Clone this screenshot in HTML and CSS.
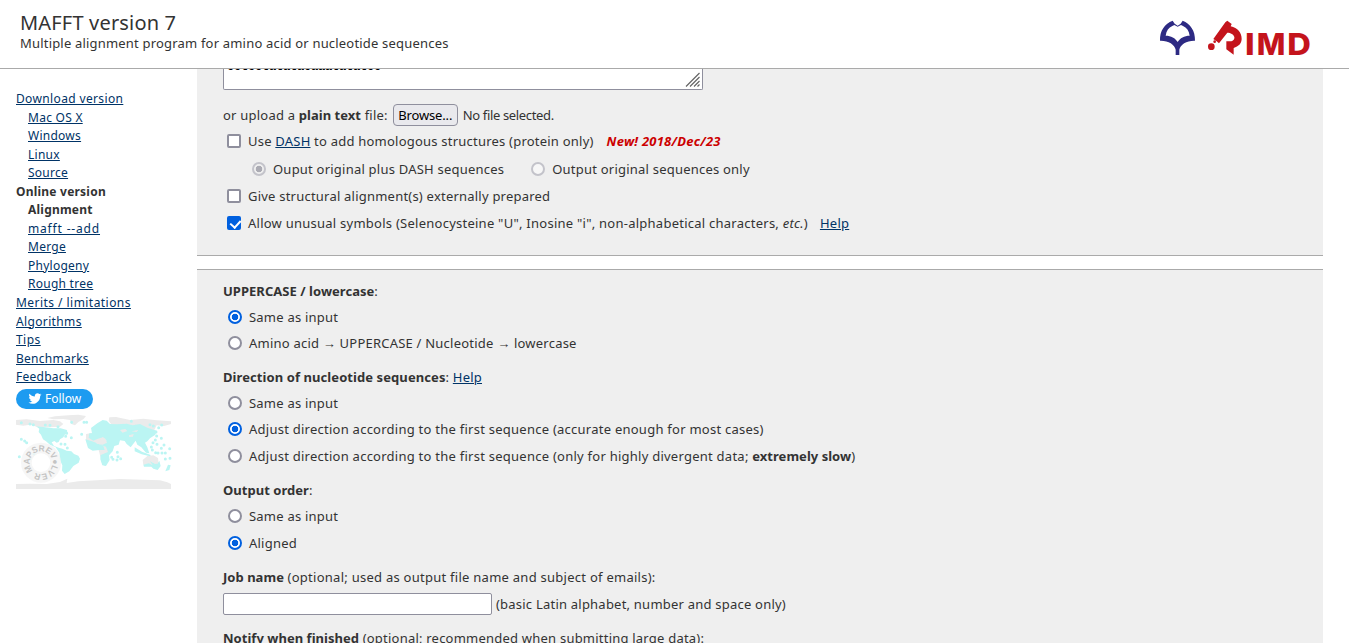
FILE: index.html
```
<!DOCTYPE html>
<html lang="en">
<head>
<meta charset="utf-8">
<title>MAFFT alignment and NJ / UPGMA phylogeny</title>
<link rel="stylesheet" href="styles.css">
</head>
<body>
<header class="top">
  <div class="brand">
    <h1>MAFFT version 7</h1>
    <p>Multiple alignment program for amino acid or nucleotide sequences</p>
  </div>
  <svg class="logos" viewBox="57 54 456 117" aria-label="Osaka University RIMD">
    <path fill="#2d2a83" d="M60 122C59 92 74 71 98 62L104 71L113 77L122 71L128 62C151 71 166 92 165 122C141 121 121 133 118 149V165H107V149C104 133 84 121 60 122Z"/>
    <path fill="#fff" d="M77 107C79 92 86 83 97 78L103 75L113 80L123 75L129 78C140 83 147 92 149 107C133 107 120 114 113 126C106 114 93 107 77 107Z"/>
    <g fill="#c4141c">
      <circle cx="214" cy="140" r="10"/>
      <circle cx="224" cy="125" r="4"/>
      <path d="M220 117L256 67L262 62L275 72L272 79C293 84 305 98 305 117C304 132 296 138 281 144V164L259 148V124H271C279 124 284 118 283 111C281 103 272 98 262 98L237 130L229 123Z"/>
      <g class="imd">
        <text x="315" y="165" textLength="29" lengthAdjust="spacingAndGlyphs">I</text>
        <text x="350" y="165" textLength="86" lengthAdjust="spacingAndGlyphs">M</text>
        <text x="442" y="165" textLength="71" lengthAdjust="spacingAndGlyphs">D</text>
      </g>
    </g>
  </svg>
</header>
<div class="page">
  <nav class="side">
    <ul>
      <li><a href="#" class="dl">Download version</a></li>
      <li class="sub"><a href="#">Mac OS X</a></li>
      <li class="sub"><a href="#">Windows</a></li>
      <li class="sub"><a href="#">Linux</a></li>
      <li class="sub"><a href="#">Source</a></li>
      <li><b>Online version</b></li>
      <li class="sub"><b>Alignment</b></li>
      <li class="sub"><a href="#" class="wide">mafft --add</a></li>
      <li class="sub"><a href="#">Merge</a></li>
      <li class="sub"><a href="#">Phylogeny</a></li>
      <li class="sub"><a href="#">Rough tree</a></li>
      <li><a href="#" class="merits">Merits / limitations</a></li>
      <li><a href="#" class="dl">Algorithms</a></li>
      <li><a href="#" class="merits">Tips</a></li>
      <li><a href="#">Benchmarks</a></li>
      <li><a href="#">Feedback</a></li>
    </ul>
    <a class="follow" href="#">
      <svg viewBox="0 0 24 24"><path fill="#fff" d="M23.954 4.569c-.885.389-1.83.654-2.825.775 1.014-.611 1.794-1.574 2.163-2.723-.951.555-2.005.959-3.127 1.184-.896-.959-2.173-1.559-3.591-1.559-2.717 0-4.92 2.203-4.92 4.917 0 .39.045.765.127 1.124C7.691 8.094 4.066 6.13 1.64 3.161c-.427.722-.666 1.561-.666 2.475 0 1.71.87 3.213 2.188 4.096-.807-.026-1.566-.248-2.228-.616v.061c0 2.385 1.693 4.374 3.946 4.827-.413.111-.849.171-1.296.171-.314 0-.615-.03-.916-.086.631 1.953 2.445 3.377 4.604 3.417-1.68 1.319-3.809 2.105-6.102 2.105-.39 0-.779-.023-1.17-.067 2.189 1.394 4.768 2.209 7.557 2.209 9.054 0 13.999-7.496 13.999-13.986 0-.209 0-.42-.015-.63.961-.689 1.8-1.56 2.46-2.548z"/></svg>Follow</a>
    <svg class="map" viewBox="18 15 465 222">
      <g fill="#ebebeb">
        <path d="M18 30L50 28L90 33L130 30L150 34L160 42L150 50L120 52L80 50L60 44L40 47L18 44Z"/>
        <path d="M112 24L135 19L175 16L205 14L228 18L220 28L205 36L195 46L184 42L180 30L160 27L130 28Z"/>
        <path d="M298 22L318 21L360 30L400 26L440 31L483 34V42L462 48L440 46L430 66L400 60L310 52L296 32Z"/>
        <path d="M228 72L262 66L284 80L292 96L300 110L294 150L285 168L276 160L266 120L240 108L228 92Z"/>
        <path d="M398 150L412 138L430 136L444 144L446 164L430 168L400 164Z"/>
        <path d="M18 222L60 221L110 222L150 216L172 206L170 219L205 214L260 211L330 207L400 209L450 211L472 217L483 222V237H18Z"/>
      </g>
      <g fill="#bbf5f3">
        <path d="M78 49L100 51L130 55L152 55L171 60L172 68L164 74L160 82L150 88L146 96L140 98L133 93L125 97L132 108L146 113L157 116L170 122L184 124L192 132L205 137L210 146L206 158L190 168L178 184L164 192L156 182L157 166L149 148L148 128L137 112L120 104L108 94L99 88L93 74L86 66L88 56Z"/>
        <path d="M243 54L262 40L278 30L290 32L300 42L320 43L350 41L368 46L390 42L412 53L440 62L436 74L420 85L412 94L405 98L412 112L418 130L408 128L399 118L394 112L382 104L377 92L362 112L350 102L344 93L330 91L326 104L313 108L308 124L297 136L299 150L288 168L277 166L271 148L272 135L294 126L288 110L272 105L268 96L290 92L278 82L260 88L250 92L236 83L238 70L246 70Z"/>
        <path d="M226 88L244 93L262 100L280 108L284 120L268 120L248 122L234 114Z"/>
        <path d="M374 112L396 125L422 135L420 139L395 133L374 124ZM400 164L416 160L428 166L420 154L432 160L442 162L448 152L452 168L443 180L430 176L424 170L402 170ZM474 164L482 166L478 180L466 184L470 174Z"/>
      </g>
      <path fill="#ebebeb" d="M258 92L276 88L278 81L286 86L291 98L278 104L260 101ZM357 76L371 72L369 80L358 81ZM330 60L346 57L352 63L338 68ZM365 64L385 60L380 66ZM425 156L435 150L442 155L436 162Z"/>
      <path class="spots" d="M34 38h0M60 42h0M70 44h0M106 45h0M120 46h0M144 50h0M170 70h0M167 79h0M184 83h0M185 37h0M215 73h0M222 37h0M230 37h0M34 88h0M44 93h0M50 98h0M28 140h0M60 146h0M72 132h0M364 34h0M376 49h0M420 44h0M430 48h0M446 53h0M455 45h0M438 66h0M440 78h0M436 90h0M429 98h0M424 111h0M427 120h0M441 103h0M454 85h0M462 105h0M444 129h0M437 128h0M456 129h0M454 115h0M479 116h0M466 129h0M480 145h0M466 147h0M322 127h0M324 140h0M321 150h0M332 146h0M309 148h0M153 102h0M165 103h0M172 114h0M305 142h0"/>
      <circle cx="93" cy="158" r="60" fill="#f4f4f4" fill-opacity=".8"/>
      <circle cx="93" cy="158" r="28" fill="#fff"/>
      <path id="arc" fill="none" d="M68.960 182.040A34 34 0 1 1 117.040 182.040A34 34 0 0 1 68.960 182.040"/>
      <text class="rev"><textPath href="#arc" textLength="204" lengthAdjust="spacingAndGlyphs">MAPSREV●LVER</textPath></text>
    </svg>
  </nav>
  <main>
    <section class="panel first">
      <div class="seq"><span>cctcctatatacaaatatatcc</span>
        <svg class="grip" viewBox="0 0 16 16"><path d="M1 14.500L14.500 1M5 14.500L14.500 5M9 14.500L14.500 9M12.500 14.500L14.500 12.500"/></svg>
      </div>
      <div class="row file"><span>or upload a <b>plain text</b> file:</span><button>Browse...</button><span class="none">No file selected.</span></div>
      <label class="row chk"><input type="checkbox"><span>Use <a href="#">DASH</a> to add homologous structures (protein only)</span><em class="new">New! 2018/Dec/23</em></label>
      <div class="row dash"><label><input type="radio" name="d" checked disabled>Ouput original plus DASH sequences</label><label><input type="radio" name="d" disabled>Output original sequences only</label></div>
      <label class="row chk ext"><input type="checkbox">Give structural alignment(s) externally prepared</label>
      <label class="row chk sym"><input type="checkbox" checked><span>Allow unusual symbols (Selenocysteine "U", Inosine "i", non-alphabetical characters, <i>etc.</i>)</span><a class="help" href="#">Help</a></label>
    </section>
    <section class="panel second">
      <div class="row"><span><b>UPPERCASE / lowercase</b>:</span></div>
      <label class="row rad"><input type="radio" name="c" checked>Same as input</label>
      <label class="row rad"><input type="radio" name="c">Amino acid → UPPERCASE / Nucleotide → lowercase</label>
      <div class="row head"><span><b class="dir">Direction of nucleotide sequences</b>: <a href="#">Help</a></span></div>
      <label class="row rad"><input type="radio" name="n">Same as input</label>
      <label class="row rad adj"><input type="radio" name="n" checked>Adjust direction according to the first sequence (accurate enough for most cases)</label>
      <label class="row rad adj low"><input type="radio" name="n"><span>Adjust direction according to the first sequence (only for highly divergent data; <b>extremely slow</b>)</span></label>
      <div class="row head"><span><b>Output order</b>:</span></div>
      <label class="row rad"><input type="radio" name="o">Same as input</label>
      <label class="row rad low"><input type="radio" name="o" checked>Aligned</label>
      <div class="row head job"><span><b>Job name</b> (optional; used as output file name and subject of emails):</span></div>
      <div class="row low"><input class="name" type="text"><span>(basic Latin alphabet, number and space only)</span></div>
      <div class="row head"><span><b>Notify when finished</b> (optional; recommended when submitting large data):</span></div>
    </section>
  </main>
</div>
</body>
</html>
```
FILE: styles.css
```
* { box-sizing: border-box; }
body {
  margin: 0;
  height: 643px;
  overflow: hidden;
  background: #fff;
  color: #333;
  font: 13px/18px "Noto Sans", sans-serif;
  letter-spacing: .22px;
}
a { color: #036; text-underline-offset: 1px; }
b { letter-spacing: .03px; }
.top {
  height: 69px;
  border-bottom: 1px solid #aaa;
  display: flex;
  justify-content: space-between;
  padding: 11px 38px 0 20px;
}
.top h1 { margin: 0; font-size: 20px; line-height: 24px; font-weight: 400; letter-spacing: .18px; }
.top p { margin: -1px 0 0; line-height: 18px; letter-spacing: .19px; }
.logos { width: 152px; height: 39px; margin-top: 7px; overflow: visible; }
.imd { font: 800 89px Inter, sans-serif; letter-spacing: 0; }
.page { display: flex; height: 574px; }
.side { width: 197px; flex: none; padding: 21px 0 0 16px; font-size: 12px; letter-spacing: .26px; }
.side ul { list-style: none; margin: 0; padding: 0; }
.side li { height: 18.55px; line-height: 18px; white-space: nowrap; }
.side .sub { padding-left: 12px; }
.side b { letter-spacing: .22px; }
.side .wide { letter-spacing: .83px; }
.side .dl { letter-spacing: .36px; }
.side .merits { letter-spacing: .45px; }
.follow {
  display: flex;
  align-items: center;
  width: 77px;
  height: 20px;
  margin-top: 2px;
  padding-left: 12px;
  gap: 3px;
  border-radius: 10px;
  background: #1d9bf0;
  color: #fff;
  font-size: 12px;
  letter-spacing: 0;
  text-decoration: none;
}
.follow svg { width: 14px; height: 13px; }
.map { display: block; width: 155px; height: 74px; margin-top: 6px; overflow: visible; }
.spots { stroke: #bbf5f3; stroke-width: 9; stroke-linecap: round; }
.rev { font: 700 26px "Liberation Sans", sans-serif; letter-spacing: 0; fill: #c4c4c4; }
main { width: 1126px; }
.panel { background: #efefef; padding: 0 26px; }
.first { height: 187px; border-bottom: 1px solid #aaa; }
.second { height: 400px; margin-top: 13px; padding-top: 8px; border-top: 1px solid #aaa; }
.seq {
  display: flex;
  justify-content: space-between;
  width: 480px;
  height: 21px;
  margin-bottom: 12px;
  padding-left: 3px;
  overflow: hidden;
  background: #fff;
  border: 1px solid #8f8f9d;
  border-top: 0;
  border-radius: 0 0 2px 2px;
}
.seq span { font: 700 12px/14px "Liberation Mono", monospace; letter-spacing: -.2px; color: #000; margin-top: -9px; }
.grip { width: 16px; height: 16px; margin: 3px 1px 0 0; fill: none; stroke: #666; stroke-width: 1.2; }
.row { display: flex; align-items: center; height: 26px; white-space: nowrap; }
.head { margin-top: 8px; }
.low { margin-top: 1px; }
.file button {
  width: 65px;
  height: 22px;
  margin: 0 5px;
  padding: 0;
  border: 1px solid #8f8f9d;
  border-radius: 4px;
  background: #e9e9ed;
  color: #000;
  font: 13px "Noto Sans", sans-serif;
  letter-spacing: -.15px;
}
.none { letter-spacing: -.35px; }
input[type=checkbox], input[type=radio] {
  appearance: none;
  flex: none;
  width: 14px;
  height: 14px;
  margin: 0 7px 0 5px;
  border: 2px solid #8f8f9d;
  border-radius: 50%;
  background: #fff;
}
input[type=checkbox] { border-radius: 2px; margin-left: 4px; }
input[type=radio]:checked { border-color: #0060df; background: radial-gradient(circle, #0060df 3px, #fff 3.6px); }
input[type=radio]:disabled { border-color: #c3c3ca; background: #f7f7f7; }
input[type=radio]:disabled:checked { background: radial-gradient(circle, #ababb3 3px, #efefef 3.6px); }
input[type=checkbox]:checked { border: 0; background: #0060df; position: relative; }
input[type=checkbox]:checked::after {
  content: "";
  position: absolute;
  left: 5px;
  top: 2px;
  width: 5px;
  height: 8px;
  border: solid #fff;
  border-width: 0 2px 2px 0;
  transform: rotate(42deg);
}
.new { margin-left: 13px; color: #c00; font-weight: 700; }
.dash { height: 30px; padding-left: 24px; gap: 22px; }
.dash label { display: flex; align-items: center; }
.ext { height: 24px; }
.sym { height: 30px; letter-spacing: .25px; }
.help { margin-left: 12px; }
.adj { letter-spacing: .25px; }
.job { letter-spacing: .26px; }
.dir { letter-spacing: .08px; }
.name { width: 269px; height: 22px; margin: 0 4px 0 0; border: 1px solid #8f8f9d; border-radius: 2px; background: #fff; }
```
